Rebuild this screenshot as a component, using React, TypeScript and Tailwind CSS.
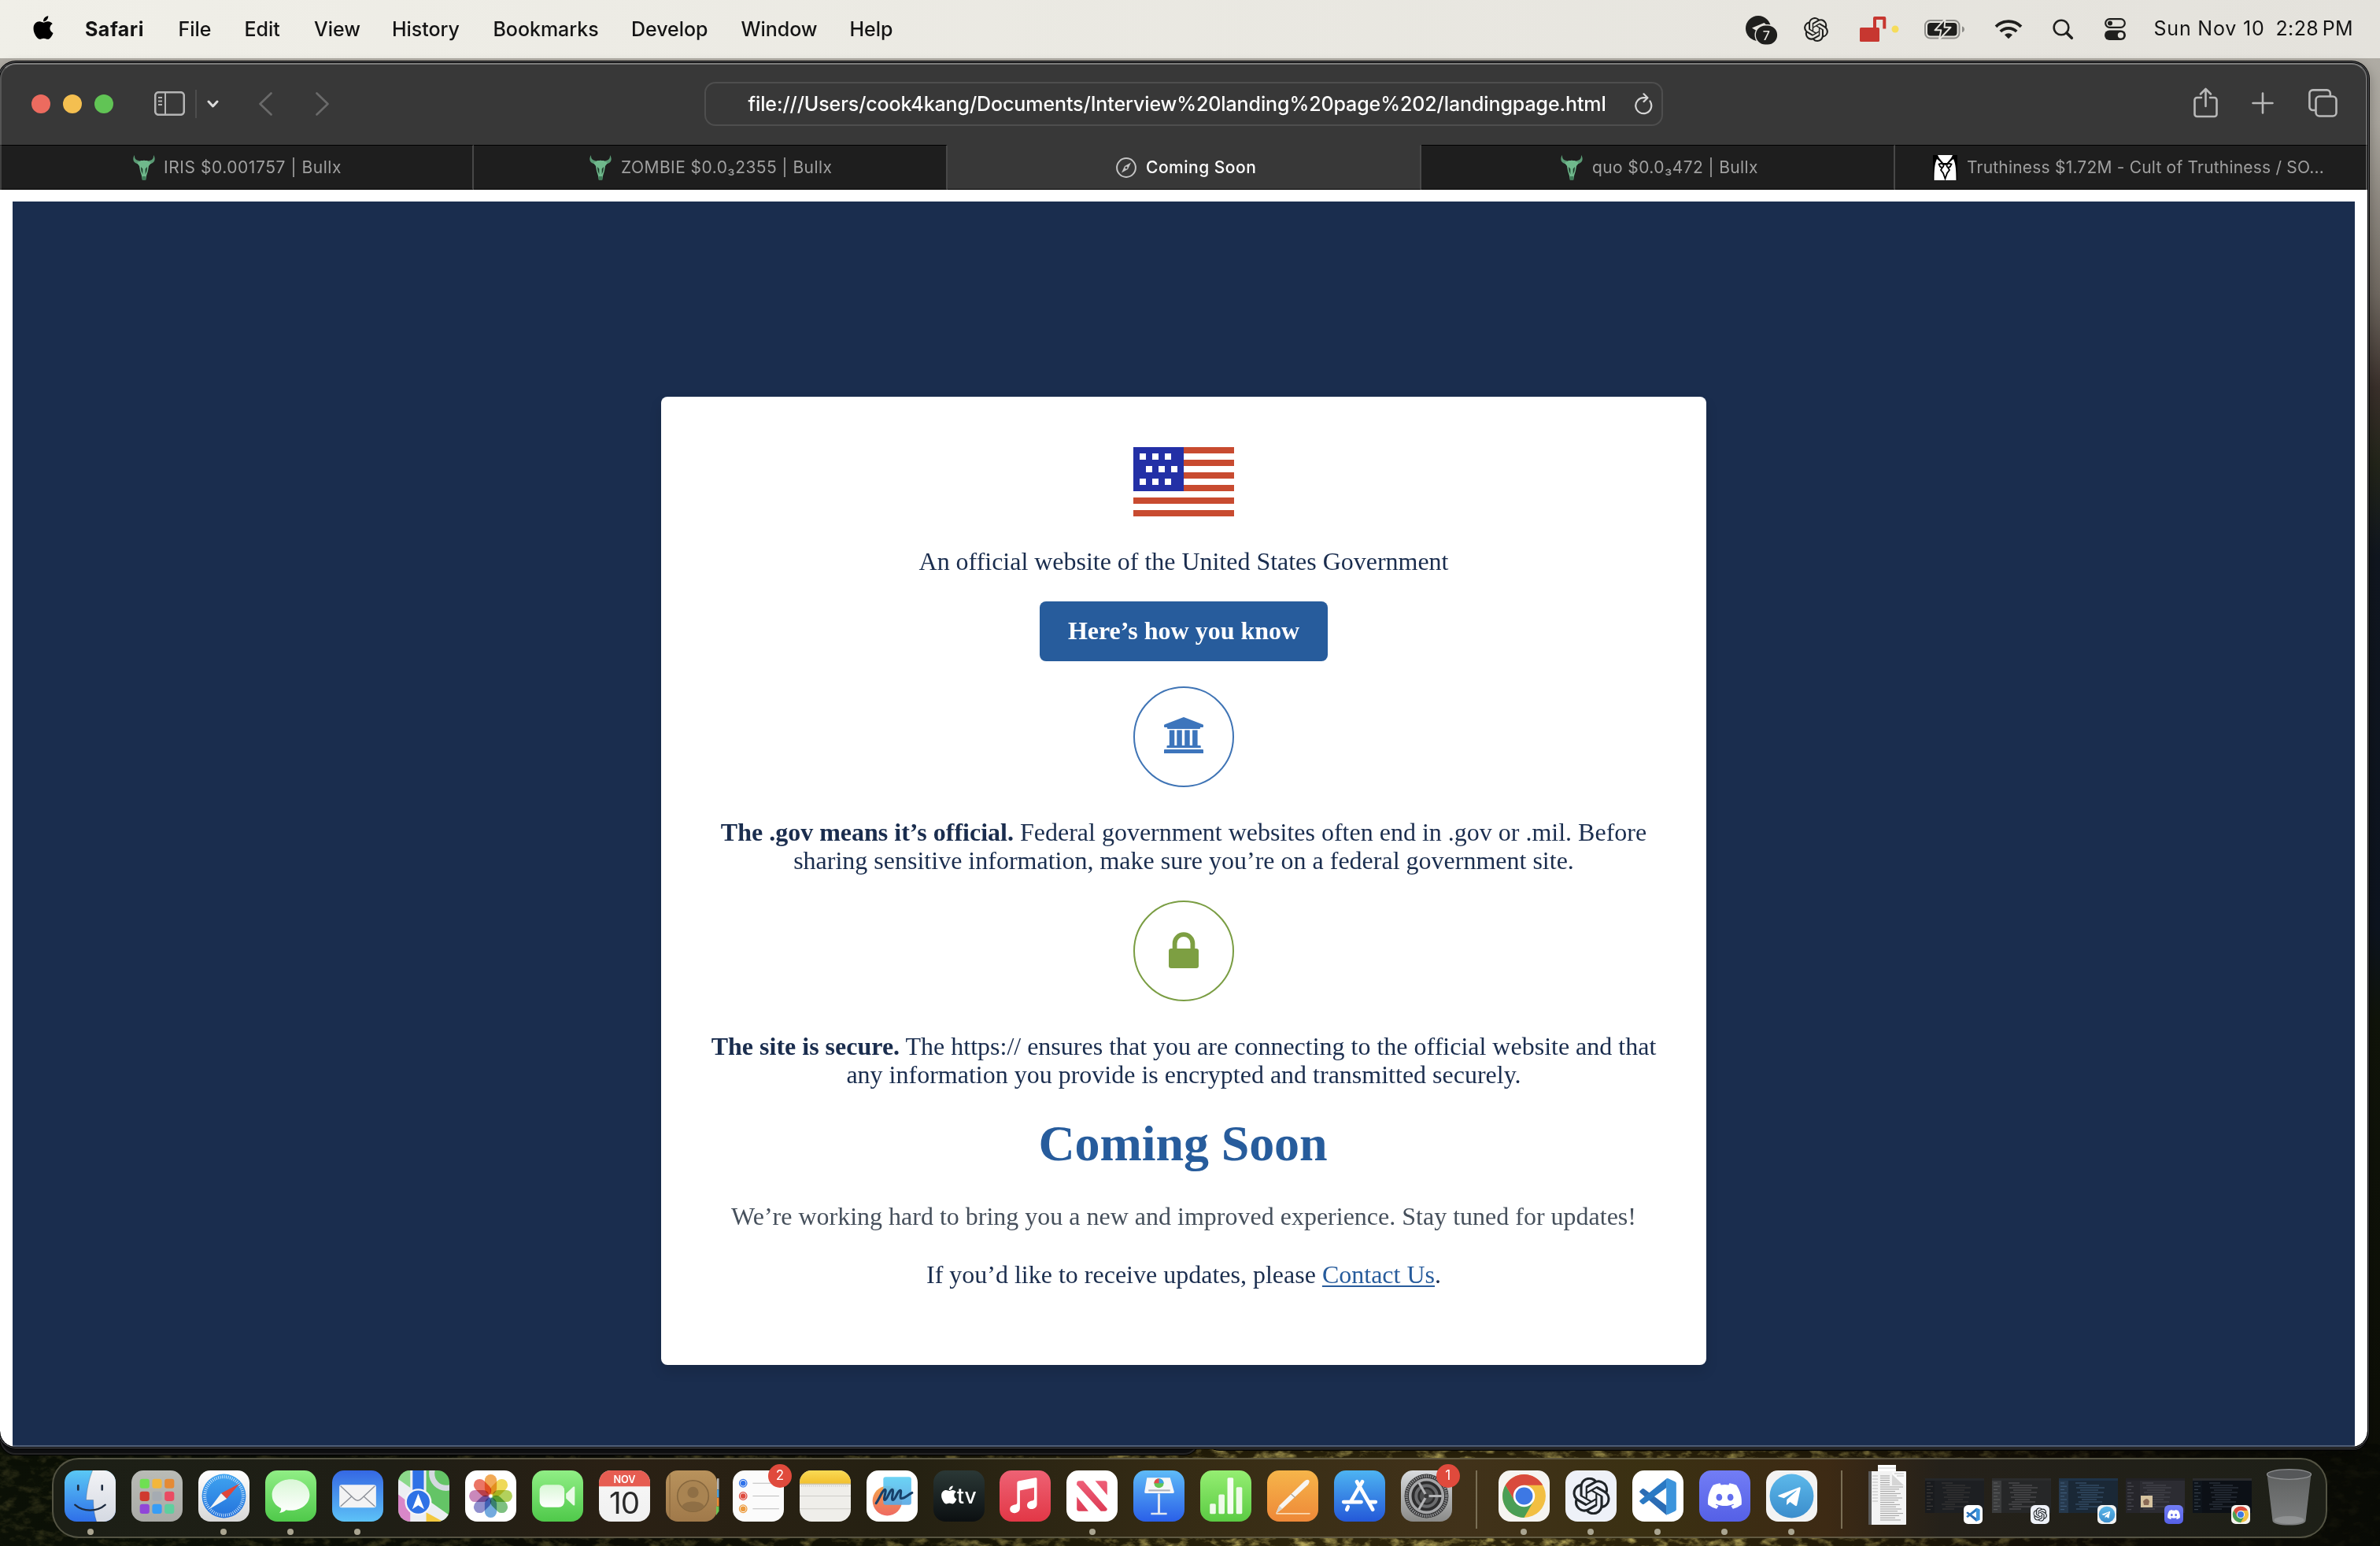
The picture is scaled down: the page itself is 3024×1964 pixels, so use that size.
import type { ReactNode } from "react";
import { FaApple, FaDiscord, FaTelegramPlane } from "react-icons/fa";
import { SiOpenai } from "react-icons/si";

/* ---------- Menu bar ---------- */

const menus = [
  { label: "File", cls: "w-[84px]" },
  { label: "Edit", cls: "w-[88.5px]" },
  { label: "View", cls: "w-[99px]" },
  { label: "History", cls: "w-[128.5px]" },
  { label: "Bookmarks", cls: "w-[175.5px]" },
  { label: "Develop", cls: "w-[139.5px]" },
  { label: "Window", cls: "w-[138px]" },
  { label: "Help", cls: "w-[60px]" },
];

function TelegramStatus() {
  return (
    <svg className="ml-auto mt-[4px] h-[38px] w-[42px]" viewBox="0 0 42 38">
      <circle cx="16" cy="16" r="16" fill="#1f1f1d" />
      <path d="M8 15.5 23.5 9l4 3.5-9 3-4 4z" fill="#e8e6e0" />
      <rect x="12.2" y="11.8" width="28.6" height="25.4" rx="12.7" fill="#1f1f1d" stroke="#e8e6e0" strokeWidth="1.4" />
      <text x="26.2" y="30.8" fontFamily="Inter" fontSize="16" textAnchor="middle" fill="#e8e6e0">7</text>
    </svg>
  );
}

function RedLock() {
  return (
    <svg className="ml-[40px] h-[32px] w-[50px]" viewBox="0 0 50 32">
      <rect x="0" y="14" width="25" height="18" rx="1.5" fill="#c73730" />
      <path d="M19 15V2h12.300v13.500" fill="none" stroke="#c73730" strokeWidth="4" strokeLinejoin="round" />
      <circle cx="45" cy="16" r="4.500" fill="#f6dc5a" />
    </svg>
  );
}

function Battery() {
  return (
    <svg className="ml-[32px] h-[26px] w-[52px]" viewBox="0 0 52 26">
      <rect x="1" y="2" width="43.500" height="22.500" rx="6.500" fill="none" stroke="#8d8c88" strokeWidth="2" />
      <rect x="4" y="5" width="37.500" height="16.500" rx="4" fill="#1f1f1d" />
      <path d="M48 9.500c2.200.5 3 2 3 3.800s-.8 3.200-3 3.800z" fill="#8d8c88" />
      <path d="M26.500 0 13.500 14.300h7.800L19 26l14.500-15.200h-8z" fill="#1f1f1d" stroke="#e7e5df" strokeWidth="2" strokeLinejoin="round" />
    </svg>
  );
}

function Wifi() {
  return (
    <svg className="ml-[37px] h-[26px] w-[36px]" viewBox="0 0 36 26" fill="none" stroke="#1f1f1d" strokeWidth="3.800">
      <path d="M2 9.800a22.500 22.500 0 0 1 32 0" />
      <path d="M7.800 16a14.500 14.500 0 0 1 20.400 0" />
      <path d="M18 25.300l-5-5a7.200 7.200 0 0 1 10 0z" fill="#1f1f1d" stroke="none" />
    </svg>
  );
}

function SearchIcon() {
  return (
    <svg className="ml-[38px] h-[27px] w-[27px]" viewBox="0 0 27 27" fill="none" stroke="#1f1f1d">
      <circle cx="11" cy="11" r="9.300" strokeWidth="2.600" />
      <path d="M17.800 17.800l6.500 6.500" strokeWidth="3.600" strokeLinecap="round" />
    </svg>
  );
}

function ControlCenter() {
  return (
    <svg className="ml-[39px] h-[28px] w-[27px]" viewBox="0 0 27 28">
      <rect x="1.200" y="1.200" width="24.600" height="10.600" rx="5.300" fill="none" stroke="#1f1f1d" strokeWidth="2.200" />
      <circle cx="7" cy="6.500" r="3" fill="#1f1f1d" />
      <rect x="0" y="15.500" width="27" height="12.500" rx="6.200" fill="#1f1f1d" />
      <circle cx="20.500" cy="21.700" r="3.700" fill="#e7e5df" />
    </svg>
  );
}

function MenuBar() {
  return (
    <header className="flex h-[74px] items-center bg-gradient-to-r from-[#f0efe8] to-[#e4e2dc] pl-[40px] pr-[34px] text-[25px] font-medium text-[#141414]">
      <FaApple className="mt-[-4px] h-[34px] w-[30px] text-black" />
      <span className="ml-[38px] mt-[1px] w-[118.500px] font-bold tracking-[0.5px]">Safari</span>
      {menus.map((m) => (
        <span key={m.label} className={m.cls + " mt-[1px] tracking-[-0.05px]"}>{m.label}</span>
      ))}
      <TelegramStatus />
      <SiOpenai className="ml-[32px] h-[31px] w-[31px] text-[#1f1f1d]" />
      <RedLock />
      <Battery />
      <Wifi />
      <SearchIcon />
      <ControlCenter />
      <span className="ml-[35px] whitespace-nowrap font-normal tracking-[0.8px]">Sun Nov 10</span>
      <span className="ml-[14px] whitespace-nowrap font-normal tracking-[0.4px] [word-spacing:-3px]">2:28 PM</span>
    </header>
  );
}

/* ---------- Browser chrome ---------- */

function Toolbar() {
  return (
    <div className="flex h-[104px] items-center bg-[#383838] pl-[39.500px] pr-[38px]">
      <div className="flex gap-[15.500px]">
        <span className="size-[24.500px] rounded-full bg-[#ec6b5f]" />
        <span className="size-[24.500px] rounded-full bg-[#f4bf50]" />
        <span className="size-[24.500px] rounded-full bg-[#61c455]" />
      </div>
      <svg className="ml-[51.500px] mt-[-1px] h-[31px] w-[39px]" viewBox="0 0 39 31" fill="none" stroke="#b5b5b5" strokeWidth="2.600">
        <rect x="1.200" y="1.200" width="36.600" height="28.600" rx="4.500" />
        <path d="M14 1v29M5 8h5M5 12.500h5M5 17h5" strokeWidth="2" />
      </svg>
      <span className="ml-[13px] h-[36px] w-[2px] bg-[#4d4d4d]" />
      <svg className="ml-[13px] h-[12px] w-[15px]" viewBox="0 0 15 12" fill="none" stroke="#dcdcdc" strokeWidth="3" strokeLinecap="round" strokeLinejoin="round">
        <path d="M2 3l5.500 6L13 3" />
      </svg>
      <svg className="ml-[51px] mt-[-1px] h-[30px] w-[17px]" viewBox="0 0 17 30" fill="none" stroke="#6a6a6a" strokeWidth="2.600" strokeLinecap="round" strokeLinejoin="round">
        <path d="M15.500 1.500L1.500 15l14 13.500" />
      </svg>
      <svg className="ml-[55px] mt-[-1px] h-[30px] w-[17px]" viewBox="0 0 17 30" fill="none" stroke="#6a6a6a" strokeWidth="2.600" strokeLinecap="round" strokeLinejoin="round">
        <path d="M1.500 1.500l14 13.500-14 13.500" />
      </svg>
      <div className="ml-[477px] flex h-[56px] w-[1218px] items-center rounded-[14px] border-2 border-[#4e4e4e] pl-[54px] text-[25px] font-medium text-white">
        <span className="mt-[1px] whitespace-nowrap tracking-[-0.1px]">
          file:///Users/cook4kang/Documents/Interview%20landing%20page%202/landingpage.html
        </span>
        <svg className="ml-auto mr-[10px] h-[28px] w-[24px]" viewBox="0 0 24 28" fill="none" stroke="#d5d5d5" strokeWidth="2.200" strokeLinecap="round" strokeLinejoin="round">
          <path d="M19.500 10.500A10 10 0 1 1 12 6.200h4" />
          <path d="M11.500 1.300l5 4.900-5 4.900" />
        </svg>
      </div>
      <svg className="ml-auto mt-[-4px] h-[39px] w-[31px]" viewBox="0 0 31 39" fill="none" stroke="#b9b9b9" strokeWidth="2.600" strokeLinecap="round" strokeLinejoin="round">
        <path d="M10 13H4.500A3 3 0 0 0 1.500 16v18a3 3 0 0 0 3 3h22a3 3 0 0 0 3-3V16a3 3 0 0 0-3-3H21" />
        <path d="M15.500 24V2.500M9 8.500l6.500-6.500L22 8.500" />
      </svg>
      <svg className="ml-[43px] mt-[-3px] h-[28px] w-[28px]" viewBox="0 0 28 28" stroke="#b9b9b9" strokeWidth="2.600" strokeLinecap="round">
        <path d="M14 1.500v25M1.500 14h25" />
      </svg>
      <svg className="ml-[44px] mt-[-3px] h-[36px] w-[37px]" viewBox="0 0 37 36" fill="none" stroke="#b9b9b9" strokeWidth="2.600" strokeLinejoin="round">
        <rect x="9.500" y="9.500" width="26" height="25" rx="4.500" />
        <path d="M9 27H5.700a4.300 4.300 0 0 1-4.300-4.300V5.700a4.300 4.300 0 0 1 4.300-4.300H23.500a4.300 4.300 0 0 1 4.300 4.300V9" />
      </svg>
    </div>
  );
}

function Bull() {
  return (
    <svg className="h-[32px] w-[32px] shrink-0" viewBox="0 0 32 32">
      <path d="M4 0C1.500 3.500 1.500 8.500 6 10.500l4 1.500h12l4-1.500c4.500-2 4.500-7 2-10.500.3 4-1 6-4 6.800L20 8l-4-1.500L12 8 8 6.800C5 6 3.700 4 4 0z" fill="#5a9a74" />
      <path d="M7 10l5-3h8l5 3-3 4-1 6-2 6.500-.8 5h-4.400l-.8-5-2-6.500-1-6z" fill="#6fb98c" />
      <path d="M12 15l2.300 2.500v7l-1.800-4.500zM20 15l-2.300 2.500v7l1.800-4.500z" fill="#1c3a2a" />
      <path d="M13.800 27h4.400v4.500h-4.400z" fill="#3f7d59" />
    </svg>
  );
}

function Compass() {
  return (
    <svg className="h-[26px] w-[26px] shrink-0" viewBox="0 0 26 26">
      <circle cx="13" cy="13" r="11.900" fill="none" stroke="#c4c4c4" strokeWidth="2" />
      <path d="M19 6.500l-4 8.500-8 4.500 4-8.500z" fill="#c4c4c4" />
      <circle cx="13" cy="13" r="1.500" fill="#383838" />
    </svg>
  );
}

function Mask() {
  return (
    <svg className="h-[32px] w-[31px] shrink-0 bg-black" viewBox="0 0 31 32">
      <path d="M1.500 32C1.500 20 2 11 5 5l8 6h5l8-6c3 6 3.500 15 3.500 27z" fill="#fff" />
      <path d="M6 0h19l-2 4-5 6h-5L8 4z" fill="#fff" />
      <path d="M5 2l7 8.500 3.500 1.500 3.500-1.500L26 2" fill="none" stroke="#000" strokeWidth="1.800" />
      <path d="M7.500 11.500c4-1.500 6 0 6 2s-2.500 3-4.500 1zM23.500 11.500c-4-1.500-6 0-6 2s2.500 3 4.500 1zM12.500 15l-2.500 4 3 4 2.500 7 2.500-7 3-4-2.500-4" fill="none" stroke="#000" strokeWidth="1.800" />
    </svg>
  );
}

const tabs: { icon: ReactNode; label: string; active?: boolean; cls: string; text: string }[] = [
  { icon: <Bull />, label: "IRIS $0.001757 | Bullx", cls: "w-[602px] pl-[167px]", text: "ml-[9px] tracking-[0.55px]" },
  { icon: <Bull />, label: "ZOMBIE $0.0₃2355 | Bullx", cls: "w-[602px] pl-[145px]", text: "ml-[10px] tracking-[0.45px]" },
  { icon: <Compass />, label: "Coming Soon", active: true, cls: "w-[602px] pl-[214px]", text: "ml-[12px] tracking-[0.5px]" },
  { icon: <Bull />, label: "quo $0.0₃472 | Bullx", cls: "w-[602px] pl-[175px]", text: "ml-[10px] tracking-[0.4px]" },
  { icon: <Mask />, label: "Truthiness $1.72M - Cult of Truthiness / SO...", cls: "w-[600px] pl-[48px]", text: "ml-[12px] tracking-[0.2px]" },
];

function TabBar() {
  return (
    <div className="flex h-[57px] text-[21px]">
      {tabs.map((t) => (
        <div
          key={t.label}
          className={
            t.cls +
            " flex items-center whitespace-nowrap border-b border-b-black border-t border-r-2 border-r-[#484848] " +
            (t.active ? "border-t-[#383838] bg-[#383838] font-medium text-white" : "border-t-black bg-[#1e1e1e] text-[#a0a0a0] last:border-r-0")
          }
        >
          {t.icon}
          <span className={t.text + " mt-[1px]"}>{t.label}</span>
        </div>
      ))}
    </div>
  );
}

/* ---------- Landing page ---------- */

const starRows = [
  { y: 8, xs: [8, 24, 40] },
  { y: 24, xs: [16, 32, 48] },
  { y: 40, xs: [8, 24, 40] },
];

function Flag() {
  return (
    <svg className="h-[88px] w-[128px]" viewBox="0 0 128 88" shapeRendering="crispEdges">
      <rect width="128" height="88" fill="#fff" />
      {[0, 16, 32, 48, 64, 80].map((y) => (
        <rect key={y} y={y} width="128" height="8" fill="#c84b30" />
      ))}
      <rect width="64" height="56" fill="#2330a6" />
      {starRows.map((r) => r.xs.map((x) => <rect key={r.y + "-" + x} x={x} y={r.y} width="8" height="8" fill="#fff" />))}
    </svg>
  );
}

function BankBadge() {
  return (
    <div className="flex size-[128px] items-center justify-center rounded-full border-[2.500px] border-[#3f74b5]">
      <svg className="mb-[4px] h-[46px] w-[50px]" viewBox="0 0 50 46" fill="#3d75bc">
        <path d="M25 0l24 9.200q1 .4 1 1.500V12q0 1-1 1h-3v1q0 1-1 1H5q-1 0-1-1v-1H1q-1 0-1-1v-1.300Q0 9.600 1 9.200z" />
        <path d="M6.800 16.500h6.500V36h3V16.500h6.500V36h3.400V16.500h6.500V36h3.400V16.500h6.500V36H46q.7 0 .7 1v2H3.500v-2q0-1 1-1h2.300z" />
        <path d="M1 41h48q1 0 1 1v4H0v-4q0-1 1-1z" />
      </svg>
    </div>
  );
}

function LockBadge() {
  return (
    <div className="flex size-[128px] items-center justify-center rounded-full border-[2.500px] border-[#7a9d43]">
      <svg className="mb-[2px] h-[46px] w-[38px]" viewBox="0 0 38 46">
        <path d="M7.600 24V14.500a11.400 11.400 0 0 1 22.800 0V24" fill="none" stroke="#7d9f42" strokeWidth="5.800" />
        <rect y="21" width="38" height="25" rx="3" fill="#7d9f42" />
      </svg>
    </div>
  );
}

function Page() {
  return (
    <main className="flex flex-1 bg-white px-4 pt-[15px]">
      <div className="flex-1 bg-[#1a2d4e] pt-[248px]">
        <section className="mx-auto flex h-[1230px] w-[1328px] flex-col items-center rounded-lg bg-white p-16 text-center font-['Liberation_Serif',serif] text-[32px] leading-[36px] text-[#1a2d4e] shadow-[0_8px_16px_rgba(0,0,0,0.12)]">
          <Flag />
          <p className="mb-[33px] mt-[39px] tracking-[-0.02px]">An official website of the United States Government</p>
          <button className="h-[76px] w-[366px] rounded-lg bg-[#275c9c] pb-[2px] font-bold text-white">Here’s how you know</button>
          <div className="mt-8"><BankBadge /></div>
          <p className="mb-[33px] mt-[39px] w-[1204px]">
            <b>The .gov means it’s official.</b> Federal government websites often end in .gov or .mil. Before<br />
            sharing sensitive information, make sure you’re on a federal government site.
          </p>
          <LockBadge />
          <p className="mb-[34px] mt-[39px] w-[1204px]">
            <b>The site is secure.</b> The https:// ensures that you are connecting to the official website and that<br />
            any information you provide is encrypted and transmitted securely.
          </p>
          <h1 className="mr-[2px] text-[64px] font-bold leading-[72px] tracking-[-0.1px] text-[#275c9c]">Coming Soon</h1>
          <p className="mt-[38px] whitespace-nowrap text-[#46505c]">
            We’re working hard to bring you a new and improved experience. Stay tuned for updates!
          </p>
          <p className="mt-[38px]">
            If you’d like to receive updates, please <a className="text-[#275c9c] underline decoration-2 underline-offset-[3px]">Contact Us</a>.
          </p>
        </section>
      </div>
    </main>
  );
}

/* ---------- Dock icons ---------- */

function Tile({ fill, children }: { fill: string; children?: ReactNode }) {
  return (
    <svg className="size-[65px] overflow-visible" viewBox="0 0 64 64">
      <rect width="64" height="64" rx="15" fill={fill} />
      {children}
    </svg>
  );
}

function Defs() {
  const grads: [string, string, string][] = [
    ["gFinder", "#5ac8f5", "#2f6fe8"],
    ["gFace", "#f2f3f6", "#d5d9e2"],
    ["gPad", "#b9bbb6", "#a9aaa6"],
    ["gSilver", "#ffffff", "#d8d8d8"],
    ["gSky", "#3fa4f0", "#2472dc"],
    ["gGreen", "#90ee85", "#4fc94a"],
    ["gWhite", "#d9f7d6", "#ffffff"],
    ["gMail", "#3568e4", "#5dc2f7"],
    ["gContact", "#b8925c", "#a0794a"],
    ["gNote", "#f9da55", "#f2c02e"],
    ["gTv", "#2b3836", "#0b0f11"],
    ["gMusic", "#ee6274", "#e23746"],
    ["gNews", "#ee5f78", "#dd3c55"],
    ["gKey", "#5ebbf8", "#2a5fe8"],
    ["gNum", "#95ee72", "#5bcb43"],
    ["gPages", "#f6b54a", "#ee8838"],
    ["gStore", "#4db4f2", "#2458d8"],
    ["gSet", "#d9dcdf", "#8a8a88"],
    ["gDiscord", "#727df5", "#5560e6"],
    ["gTele", "#5cb8ea", "#3b8dcc"],
    ["gFree1", "#5fd0f4", "#5aa8e4"],
    ["gFree2", "#f2a24c", "#ef6a62"],
    ["gCal", "#f8f8f8", "#f0f0f0"],
    ["gTrash", "#6b6d6e", "#8d8f91"],
  ];
  return (
    <svg className="absolute size-0">
      <defs>
        {grads.map(([id, a, b]) => (
          <linearGradient key={id} id={id} x1="0" y1="0" x2="0" y2="1">
            <stop offset="0" stopColor={a} />
            <stop offset="1" stopColor={b} />
          </linearGradient>
        ))}
        <clipPath id="tile"><rect width="64" height="64" rx="15" /></clipPath>
        <filter id="foliage" x="0" y="0" width="100%" height="100%">
          <feTurbulence type="fractalNoise" baseFrequency="0.05 0.09" numOctaves="4" seed="7" />
          <feColorMatrix values="0 0 0 0 0.46  0 0 0 0 0.38  0 0 0 0 0.1  2.6 1.6 0 0 -2.0" />
        </filter>
      </defs>
    </svg>
  );
}

const Finder = () => (
  <Tile fill="url(#gFinder)">
    <g clipPath="url(#tile)">
      <path d="M35 0C31 10 28 22 27 37h9c0 9 1 18 4 27h24V0z" fill="url(#gFace)" />
      <path d="M35 0C31 10 28 22 27 37h9c0 9 1 18 4 27" fill="none" stroke="#1c2c44" strokeOpacity=".25" strokeWidth="1" />
    </g>
    <path d="M17 19v5M47 19v5" stroke="#1d2b40" strokeWidth="2.600" strokeLinecap="round" />
    <path d="M13 43c10 9 28 9 38 0" fill="none" stroke="#1d2b40" strokeWidth="2.200" strokeLinecap="round" />
  </Tile>
);

const padColors = ["#6fe052", "#f3b63b", "#e58a34", "#d03a2e", "#a5abb2", "#ea4b62", "#9046d8", "#379df5", "#5fcf9e"];
const Launchpad = () => (
  <Tile fill="url(#gPad)">
    {padColors.map((c, i) => (
      <rect key={c} x={10.500 + (i % 3) * 15.500} y={10.500 + Math.floor(i / 3) * 15.800} width="12" height="12" rx="3" fill={c} />
    ))}
  </Tile>
);

const Safari = () => (
  <Tile fill="url(#gSilver)">
    <circle cx="32" cy="32" r="27.500" fill="url(#gSky)" />
    <circle cx="32" cy="32" r="24" fill="none" stroke="#cfe6fb" strokeWidth="4" strokeDasharray=".9 1.600" />
    <path d="M51.500 16.500L35.500 35.500 28.500 28.500z" fill="#e0463a" />
    <path d="M13.500 48.500L28.500 28.500 35.500 35.500z" fill="#f4f4f4" />
  </Tile>
);

const Messages = () => (
  <Tile fill="url(#gGreen)">
    <path d="M32 11c13 0 23.500 8.300 23.500 19.500S45 50 32 50c-2 0-4-.2-6-.6-2 2-5 3.400-8.500 3.600 2-2 2.500-3.600 2.300-5.800C12.500 44 8.500 38 8.500 30.500 8.500 19.300 19 11 32 11z" fill="url(#gWhite)" />
  </Tile>
);

const Mail = () => (
  <Tile fill="url(#gMail)">
    <rect x="9" y="18" width="46" height="28.500" rx="3" fill="#f3f3f4" />
    <path d="M10.500 45L25 32M53.500 45L39 32M10.500 19.500L27 35c3 3.500 7 3.500 10 0l16.500-15.500" fill="none" stroke="#8d9199" strokeWidth="1.400" />
  </Tile>
);

const Maps = () => (
  <Tile fill="#64c466">
    <g clipPath="url(#tile)">
      <path d="M0 0h16v24L0 12z" fill="#8bd88a" />
      <path d="M0 24l20 14v26H0z" fill="#d987c8" />
      <path d="M0 11l64 45v8H44L0 30z" fill="#eceef2" />
      <path d="M34 52l22 12H34z" fill="#f2c83f" />
      <circle cx="60" cy="4" r="18" fill="none" stroke="#d5d9e0" strokeWidth="7" />
      <path d="M15 0h20v64H15z" fill="#eceef2" />
      <path d="M18 0h14v40H18z" fill="#2f72e6" />
    </g>
    <circle cx="25" cy="39.500" r="15.500" fill="#2f72e6" stroke="#f4f5f8" strokeWidth="2.400" />
    <path d="M25 29l7.500 19.500-7.500-5-7.500 5z" fill="#fff" />
  </Tile>
);

const petals = ["#f09a38", "#ecd23c", "#a5c93f", "#66b56a", "#5a9bd8", "#7d7dc6", "#c073ae", "#e85d4a"];
const Photos = () => (
  <Tile fill="#fff">
    {petals.map((c, i) => (
      <rect key={c} x="24.500" y="5" width="15" height="25" rx="7.500" fill={c} fillOpacity=".85" transform={"rotate(" + i * 45 + " 32 32)"} className="mix-blend-multiply" />
    ))}
  </Tile>
);

const FaceTime = () => (
  <Tile fill="url(#gGreen)">
    <rect x="9.500" y="18" width="31" height="28" rx="7" fill="url(#gWhite)" />
    <path d="M42.500 29l9-8.500q2-1 2 1v21q0 2-2 1l-9-8.500z" fill="#e8fae6" />
  </Tile>
);

const Calendar = () => (
  <Tile fill="url(#gCal)">
    <g clipPath="url(#tile)"><rect width="64" height="20" fill="#e65d52" /></g>
    <text x="32" y="15.300" textAnchor="middle" fontFamily="Inter" fontWeight="600" fontSize="12.500" fill="#fff">NOV</text>
    <text x="31.500" y="54" textAnchor="middle" fontFamily="Inter" fontSize="38" letterSpacing="-1" fill="#2a2a2a">10</text>
  </Tile>
);

const Contacts = () => (
  <Tile fill="url(#gContact)">
    <path d="M64 10h2.500v14H64z" fill="#b5b5b5" />
    <path d="M64 24h2.500v10H64z" fill="#4aa0e0" />
    <path d="M64 34h2.500v11H64z" fill="#ec8c35" />
    <path d="M63 45h3.500v6l-3.500 5z" fill="#6cc452" />
    <path d="M5 5v54" stroke="#8c6a3e" strokeWidth="1.200" />
    <circle cx="34" cy="32" r="19.500" fill="#a98452" stroke="#86673e" strokeWidth="1.600" />
    <circle cx="34" cy="27.500" r="7" fill="#8f6f45" />
    <path d="M20 45c3-8 25-8 28 0-7 8-21 8-28 0z" fill="#8f6f45" />
  </Tile>
);

const reminderRows = [
  { color: "#2f72ea", y: 16 },
  { color: "#dd4a3e", y: 32 },
  { color: "#ec9a3c", y: 48 },
];
const Reminders = () => (
  <Tile fill="#fbfbfb">
    {reminderRows.map((r) => (
      <g key={r.y}>
        <circle cx="13" cy={r.y} r="4.700" fill="none" stroke={r.color} strokeWidth="1.200" />
        <circle cx="13" cy={r.y} r="3.300" fill={r.color} />
        <path d={"M25 " + r.y + "h33"} stroke="#bdbdbd" strokeWidth="1" />
      </g>
    ))}
  </Tile>
);

const Notes = () => (
  <Tile fill="#efeeea">
    <g clipPath="url(#tile)"><rect width="64" height="16.500" fill="url(#gNote)" /></g>
    <path d="M0 17h64" stroke="#b9ae8e" strokeWidth="1" />
    <path d="M2 19.500h60" stroke="#b5b5b0" strokeWidth="1" strokeDasharray="1 1.500" />
    <path d="M0 32h64M0 48h64" stroke="#cfcec9" strokeWidth="1" />
  </Tile>
);

const Freeform = () => (
  <Tile fill="#fff">
    <circle cx="26" cy="38" r="18.500" fill="url(#gFree2)" />
    <rect x="21" y="8" width="35" height="35" rx="3" fill="url(#gFree1)" fillOpacity=".92" />
    <path d="M12 41c5-7 8-17 11-17s-3 13 0 13 6-13 9-13-2 13 1 13 6-12 9-12-2 10 2 10 7-4 13-7" fill="none" stroke="#17406a" strokeWidth="3" strokeLinecap="round" />
  </Tile>
);

const AppleTv = () => (
  <Tile fill="url(#gTv)">
    <FaApple x="6.500" y="17.500" size={26} color="#fff" />
    <text x="29.500" y="41.500" fontFamily="Inter" fontWeight="500" fontSize="26" fill="#fff">tv</text>
  </Tile>
);

const Music = () => (
  <Tile fill="url(#gMusic)">
    <path d="M22 15.500q0-1.700 1.700-2.100L45 9.200q1.800-.3 1.800 1.500V42c0 4-3 6-6.500 6.300-3.500.2-5.800-1.800-5.800-4.800 0-3.500 2.800-5 6-5.600 2-.4 2.800-1 2.800-2.800V21.500L25.500 25v22c0 4-3 6-6.500 6.300-3.500.2-6-1.800-6-4.800 0-3.500 2.800-5 6-5.600 2-.4 3-1 3-2.800z" fill="#fff" />
  </Tile>
);

const News = () => (
  <Tile fill="#fff">
    <path d="M36 13h12q3 0 3 3v15zM13 33l14.500 18H16q-3 0-3-3z" fill="url(#gNews)" />
    <path d="M13 16q0-3 3-3h5l30 35q0 3-3 3h-5L13 18z" fill="url(#gNews)" />
  </Tile>
);

const Keynote = () => (
  <Tile fill="url(#gKey)">
    <path d="M17 9h29l5 17.500q.5 2-1.500 2h-34q-2 0-1.500-2z" fill="#f6f7f9" />
    <circle cx="32" cy="16" r="6" fill="#62c554" />
    <path d="M32 16V10a6 6 0 0 1 6 6z" fill="#3aa0e8" />
    <path d="M32 16V10a6 6 0 0 0-6 6z" fill="#e5484d" />
    <path d="M19 25h27" stroke="#aab0ba" strokeWidth="2" />
    <path d="M30.500 29h3v24h-3zM22 53h20v2.500H22z" fill="#dfe6f2" />
  </Tile>
);

const Numbers = () => (
  <Tile fill="url(#gNum)">
    <rect x="12" y="41.500" width="7.500" height="13" rx="1.500" fill="#eefbe9" />
    <rect x="23" y="30" width="7.500" height="24.500" rx="1.500" fill="#eefbe9" />
    <rect x="34" y="9" width="7.500" height="45.500" rx="1.500" fill="#f6fdf3" />
    <rect x="45" y="21" width="7.500" height="33.500" rx="1.500" fill="#eefbe9" />
  </Tile>
);

const Pages = () => (
  <Tile fill="url(#gPages)">
    <path d="M12 54h41" stroke="#fbd9b0" strokeWidth="1.800" strokeLinecap="round" />
    <path d="M11 54l4-10L46 14q4-3.500 6-2t-1 6L19 48z" fill="#f8f6f2" />
    <path d="M11 54l4-10 4 4z" fill="#d9d4cb" />
    <path d="M30 29.500l5 4.500" stroke="#a8a197" strokeWidth="1.200" />
  </Tile>
);

const AppStore = () => (
  <Tile fill="url(#gStore)">
    <g stroke="#fff" strokeWidth="4.600" strokeLinecap="round" fill="none">
      <path d="M35.500 14L21 39M17.500 45.500l-1.500 3.500" />
      <path d="M28.500 14L48.500 49" />
      <path d="M12 39.500h22M44 39.500h8" />
    </g>
  </Tile>
);

const Settings = () => (
  <Tile fill="url(#gSet)">
    <circle cx="32" cy="32" r="27.500" fill="#2d2d2e" />
    <circle cx="32" cy="32" r="25" fill="none" stroke="#8b8c8e" strokeWidth="3.600" strokeDasharray="1.600 1.100" />
    <circle cx="32" cy="32" r="20.500" fill="none" stroke="#a6a7a9" strokeWidth="3.600" />
    <circle cx="32" cy="32" r="13" fill="none" stroke="#6a6b6d" strokeWidth="4" />
    <circle cx="32" cy="32" r="8.500" fill="#4e4f50" />
    <path d="M32 32h19M32 32l-9.500-16.500M32 32l-9.500 16.500" stroke="#b4b5b7" strokeWidth="3" />
    <circle cx="32" cy="32" r="3" fill="#3a3a3b" />
  </Tile>
);

function ChromeMark() {
  return (
    <g>
      <circle cx="32" cy="32" r="27" fill="#f2bf42" />
      <path d="M8.600 18.500A27 27 0 0 1 55.400 18.500H32L20.300 38.700z" fill="#d94b3d" />
      <path d="M8.600 18.500a27 27 0 0 0 23.400 40.500L43.700 38.700 32 45.500 20.300 38.700z" fill="#4a9e55" />
      <circle cx="32" cy="32" r="13.500" fill="#fff" />
      <circle cx="32" cy="32" r="10.800" fill="#3d78e4" />
    </g>
  );
}
const Chrome = () => <Tile fill="#f5f4f1"><ChromeMark /></Tile>;
const ChatGpt = () => <Tile fill="#eef1f8"><SiOpenai x="9" y="8.500" size={47} color="#1f2428" /></Tile>;
const VsCode = () => (
  <Tile fill="#fff">
    <path d="M43 56L9.500 27.500q-1-1 0-2l3-2.500q1-.8 2 0L43 44z" fill="#2b6cb4" />
    <path d="M43 10L9.500 37.500q-1 1 0 2l3 2.500q1 .8 2 0L43 21.500z" fill="#2a79c4" />
    <path d="M42.500 10.500q1-1 2.500-.4l8.500 4q1.500.8 1.500 2.400v32q0 1.600-1.500 2.400l-8.500 4q-1.500.6-2.500-.4z" fill="#3c94dc" />
  </Tile>
);
const Discord = () => <Tile fill="url(#gDiscord)"><FaDiscord x="9" y="9" size={46} color="#fff" /></Tile>;
const Telegram = () => (
  <Tile fill="#f3f3f3">
    <circle cx="32" cy="32" r="27.500" fill="url(#gTele)" />
    <FaTelegramPlane x="13" y="17" size={32} color="#fff" />
  </Tile>
);

const apps: { icon: ReactNode; name: string; running?: boolean; badge?: string }[] = [
  { name: "Finder", icon: <Finder />, running: true },
  { name: "Launchpad", icon: <Launchpad /> },
  { name: "Safari", icon: <Safari />, running: true },
  { name: "Messages", icon: <Messages />, running: true },
  { name: "Mail", icon: <Mail />, running: true },
  { name: "Maps", icon: <Maps /> },
  { name: "Photos", icon: <Photos /> },
  { name: "FaceTime", icon: <FaceTime /> },
  { name: "Calendar", icon: <Calendar /> },
  { name: "Contacts", icon: <Contacts /> },
  { name: "Reminders", icon: <Reminders />, badge: "2" },
  { name: "Notes", icon: <Notes /> },
  { name: "Freeform", icon: <Freeform /> },
  { name: "TV", icon: <AppleTv /> },
  { name: "Music", icon: <Music /> },
  { name: "News", icon: <News />, running: true },
  { name: "Keynote", icon: <Keynote /> },
  { name: "Numbers", icon: <Numbers /> },
  { name: "Pages", icon: <Pages /> },
  { name: "App Store", icon: <AppStore /> },
  { name: "Settings", icon: <Settings />, badge: "1" },
];

const extraApps: typeof apps = [
  { name: "Chrome", icon: <Chrome />, running: true },
  { name: "ChatGPT", icon: <ChatGpt />, running: true },
  { name: "VS Code", icon: <VsCode />, running: true },
  { name: "Discord", icon: <Discord />, running: true },
  { name: "Telegram", icon: <Telegram />, running: true },
];

function DockApp({ icon, running, badge }: { icon: ReactNode; running?: boolean; badge?: string }) {
  return (
    <div className="relative size-[65px]">
      {icon}
      {badge && (
        <span className="absolute -right-[10px] -top-[8px] flex size-[30px] items-center justify-center rounded-full bg-[#e04a3c] text-[17px] text-white">
          {badge}
        </span>
      )}
      {running && <span className="absolute left-[28.500px] top-[74.500px] size-[8px] rounded-full bg-[#aaa591]" />}
    </div>
  );
}

function DocumentStack() {
  return (
    <svg className="ml-[33px] mt-[-6.500px] h-[76px] w-[48px] shrink-0" viewBox="0 0 48 76">
      <rect x="12" y="0" width="23" height="20" fill="#fff" />
      <path d="M12 4h23" stroke="#bbb" strokeWidth=".8" />
      <rect x="0" y="8" width="48" height="68" rx="1" fill="#f3f3f3" />
      <rect x="0" y="8" width="4" height="68" fill="#5b5b5b" />
      {Array.from({ length: 21 }, (_, i) => (
        <path key={i} d={"M15 " + (14 + i * 2.800) + "h" + (i < 5 ? 12 : 18 + ((i * 7) % 12))} stroke="#999" strokeWidth=".9" />
      ))}
      {Array.from({ length: 9 }, (_, i) => (
        <path key={i} d={"M5 " + (14 + i * 4) + "h7"} stroke="#b0b0b0" strokeWidth=".8" />
      ))}
      <path d="M30 9h17v17H30z" fill="#fafafa" />
      <path d="M33 11h12M36 14h9" stroke="#aaa" strokeWidth=".8" />
      <path d="M30 12v14h15z" fill="#d5d5d5" />
    </svg>
  );
}

function Thumb({ bg, side, line, head, badge, picture }: { bg: string; side: string; line: string; head: string; badge: ReactNode; picture?: boolean }) {
  return (
    <div className="relative h-[44px] w-[75px]">
      <svg className="h-[44px] w-[75px]" viewBox="0 0 75 44">
        <rect width="75" height="44" fill={bg} />
        <rect width={picture ? 18 : 12} height="44" fill={side} />
        <rect width="75" height="3" fill={head} />
        {Array.from({ length: 12 }, (_, i) => (
          <path key={i} d={"M" + (21 + ((i * 5) % 9)) + " " + (6 + i * 3) + "h" + (14 + ((i * 11) % 24))} stroke={line} strokeWidth="1" />
        ))}
        {Array.from({ length: 9 }, (_, i) => (
          <path key={i} d={"M2 " + (6 + i * 4.200) + "h" + (5 + ((i * 3) % 6))} stroke={line} strokeWidth="1.200" />
        ))}
        {picture && <path d="M19 22h15v15H19z" fill="#d6c3a0" />}
        {picture && <path d="M22 29q5-6 8 0l-1 5h-6z" fill="#8a6a56" />}
      </svg>
      <div className="absolute left-[49.500px] top-[34px] size-[24px] [&>svg]:size-[24px]">{badge}</div>
    </div>
  );
}

function Trash() {
  return (
    <svg className="ml-[19px] mt-[-2px] h-[72px] w-[57px] shrink-0" viewBox="0 0 57 72">
      <path d="M.500 6.500L7.500 66c.5 3.500 8 5.500 21 5.500s20.500-2 21-5.500L56.500 6.500z" fill="url(#gTrash)" fillOpacity=".85" />
      <ellipse cx="28.500" cy="65" rx="19" ry="5" fill="#a5a7a9" fillOpacity=".5" />
      <ellipse cx="28.500" cy="7" rx="28" ry="6.300" fill="#555759" stroke="#8e9092" strokeWidth="1.200" />
    </svg>
  );
}

function Dock() {
  return (
    <nav className="absolute left-[66px] top-[1852px] flex h-[102px] w-[2891px] items-start rounded-[34px] border-2 border-[#8a8770]/50 bg-[linear-gradient(90deg,#1c1f16_0%,#1f1e15_15%,#2a2014_25%,#252112_38%,#382d15_52%,#41321a_62%,#3a3012_70%,#3d2a14_78%,#25211a_83%,#1d1f17_100%)] bg-origin-border pl-[14px] pt-[13.500px]">
      <div className="flex gap-[19.900px]">
        {apps.map((a) => <DockApp key={a.name} icon={a.icon} running={a.running} badge={a.badge} />)}
      </div>
      <span className="ml-[30px] h-[74px] w-[2px] bg-[#7a6f55]" />
      <div className="ml-[27px] flex gap-[20px]">
        {extraApps.map((a) => <DockApp key={a.name} icon={a.icon} running={a.running} />)}
      </div>
      <span className="ml-[30px] h-[74px] w-[2px] bg-[#7a6f55]" />
      <DocumentStack />
      <div className="ml-[24px] mt-[10.500px] flex gap-[10px]">
        <Thumb bg="#1d1f22" side="#191b1e" head="#25272a" line="#3c3a38" badge={<VsCode />} />
        <Thumb bg="#262728" side="#3b3c3d" head="#2b2c2d" line="#5a5b5c" badge={<ChatGpt />} />
        <Thumb bg="#1a2836" side="#26394d" head="#1f3347" line="#3d5a78" badge={<Telegram />} />
        <Thumb bg="#2c2c32" side="#26262b" head="#222226" line="#4a4a52" badge={<Discord />} picture />
        <Thumb bg="#0c1016" side="#0e141b" head="#2a2b2d" line="#343d48" badge={<Chrome />} />
      </div>
      <Trash />
    </nav>
  );
}

/* ---------- Desktop ---------- */

export default function App() {
  return (
    <div className="relative h-[1964px] w-[3024px] overflow-hidden bg-[linear-gradient(180deg,#b5b2ab_0%,#a8a49c_8%,#6f6860_19%,#3a302b_25%,#23251a_30%,#10161f_36%,#0d141f_60%,#10140a_66%,#0c0d06_100%)] font-['Inter',sans-serif] antialiased">
      <Defs />
      <div className="absolute bottom-0 left-0 h-[130px] w-full bg-[linear-gradient(90deg,#0b1006_0%,#0a0b04_25%,#141305_38%,#2c240b_55%,#2b220a_72%,#0e0b05_88%,#080a05_100%)]">
        <svg className="h-full w-full [mask-image:linear-gradient(90deg,rgba(0,0,0,0.2)_0%,rgba(0,0,0,0.25)_20%,rgba(0,0,0,0.6)_45%,rgba(0,0,0,1)_52%,rgba(0,0,0,0.9)_72%,rgba(0,0,0,0.3)_86%,rgba(0,0,0,0.05)_92%)]">
          <rect width="3024" height="130" filter="url(#foliage)" />
        </svg>
      </div>
      <MenuBar />
      <div className="absolute left-0 top-[1600px] h-[248px] w-[1524px] rounded-b-[20px] border-2 border-[#2b2b2c] bg-[#111214] shadow-[0_0_0_1px_#000]" />
      <div className="absolute left-[1530px] top-[1600px] h-[242px] w-[1479px] rounded-b-[20px] border-2 border-[#34363a] bg-[#15171a] shadow-[0_0_0_1px_#000]" />
      <div className="absolute left-0 top-[80px] flex h-[1758px] w-[3008px] flex-col overflow-hidden rounded-[20px]">
        <Toolbar />
        <TabBar />
        <Page />
      </div>
      <div className="pointer-events-none absolute left-0 top-[80px] h-[1758px] w-[3008px] rounded-[20px] border-2 border-white/25 border-t-white/35 border-l-white/15 shadow-[0_0_0_1px_#000,0_0_0_2px_#55565a,0_0_0_3px_#000,0_6px_14px_4px_rgba(0,0,0,0.25)]" />
      <Dock />
    </div>
  );
}
